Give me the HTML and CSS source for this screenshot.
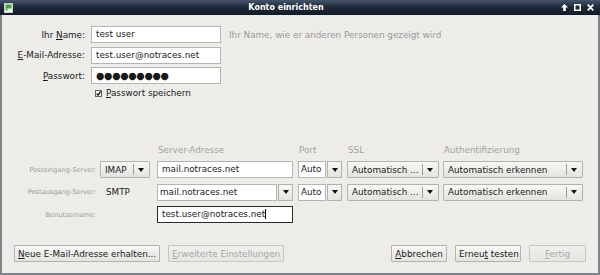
FILE: index.html
```html
<!DOCTYPE html>
<html lang="de">
<head>
    <meta charset="UTF-8">
    <title>Konto einrichten</title>
    <link rel="stylesheet" href="styles.css">
</head>
<body>
<div class="window">
    <div class="titlebar">
        <svg class="app-icon" width="9" height="10" viewBox="0 0 9 10">
            <rect x="0.5" y="0.5" width="8" height="9" fill="#f4f4f0" stroke="#c9cfc4"/>
            <rect x="1.5" y="1.5" width="6" height="4" fill="#3fa83a"/>
            <rect x="1.5" y="5.5" width="2" height="2" fill="#3fa83a"/>
        </svg>
        <span class="title">Konto einrichten</span>
        <div class="title-buttons">
            <svg width="7" height="7" viewBox="0 0 7 7"><path d="M3.5 0 L7 3.5 H4.8 V7 H2.2 V3.5 H0 Z" fill="#fff"/></svg>
            <svg width="7" height="7" viewBox="0 0 7 7"><rect x="0.75" y="0.75" width="5.5" height="5.5" fill="none" stroke="#fff" stroke-width="1.5"/></svg>
            <svg width="7" height="7" viewBox="0 0 7 7"><path d="M0.7 0.7 L6.3 6.3 M6.3 0.7 L0.7 6.3" stroke="#fff" stroke-width="1.7"/></svg>
        </div>
    </div>

    <div class="content">
        <div class="identity">
            <div class="field-row">
                <label class="field-label">Ihr <u>N</u>ame:</label>
                <div class="entry">test user</div>
                <span class="hint">Ihr Name, wie er anderen Personen gezeigt wird</span>
            </div>
            <div class="field-row">
                <label class="field-label"><u>E</u>-Mail-Adresse:</label>
                <div class="entry">test.user@notraces.net</div>
            </div>
            <div class="field-row">
                <label class="field-label"><u>P</u>asswort:</label>
                <div class="entry password">●●●●●●●●●</div>
            </div>
            <div class="check-row">
                <svg class="checkbox" width="7" height="7" viewBox="0 0 7 7">
                    <rect x="0.5" y="0.5" width="6" height="6" fill="#fff" stroke="#666"/>
                    <path d="M1.6 3.6 L3 5.2 L5.6 1.4" fill="none" stroke="#111" stroke-width="1.3"/>
                </svg>
                <span><u>P</u>asswort speichern</span>
            </div>
        </div>

        <div class="servers">
            <span></span><span></span>
            <span class="col-head">Server-Adresse</span>
            <span class="col-head">Port</span>
            <span class="col-head">SSL</span>
            <span class="col-head">Authentifizierung</span>

            <span class="row-label">Posteingang-Server:</span>
            <div class="combo w-imap"><span class="combo-text">IMAP</span><span class="sep"></span><span class="arrow"></span></div>
            <div class="entry w-server">mail.notraces.net</div>
            <div class="combo-entry w-port"><div class="entry">Auto</div><div class="drop"><span class="arrow"></span></div></div>
            <div class="combo w-ssl"><span class="combo-text">Automatisch ...</span><span class="sep"></span><span class="arrow"></span></div>
            <div class="combo w-auth"><span class="combo-text">Automatisch erkennen</span><span class="sep"></span><span class="arrow"></span></div>

            <span class="row-label">Postausgang-Server:</span>
            <span class="plain">SMTP</span>
            <div class="combo-entry w-server"><div class="entry">mail.notraces.net</div><div class="drop"><span class="arrow"></span></div></div>
            <div class="combo-entry w-port"><div class="entry">Auto</div><div class="drop"><span class="arrow"></span></div></div>
            <div class="combo w-ssl"><span class="combo-text">Automatisch ...</span><span class="sep"></span><span class="arrow"></span></div>
            <div class="combo w-auth"><span class="combo-text">Automatisch erkennen</span><span class="sep"></span><span class="arrow"></span></div>

            <span class="row-label">Benutzername:</span>
            <span></span>
            <div class="entry focused w-server">test.user@notraces.net<span class="caret"></span></div>
        </div>

        <div class="actions">
            <div class="action-group">
                <button class="btn"><u>N</u>eue E-Mail-Adresse erhalten...</button>
                <button class="btn disabled"><u>E</u>rweiterte Einstellungen</button>
            </div>
            <div class="action-group">
                <button class="btn w-cancel"><u>A</u>bbrechen</button>
                <button class="btn w-retest">Erneu<u>t</u> testen</button>
                <button class="btn disabled w-done"><u>F</u>ertig</button>
            </div>
        </div>
    </div>
</div>
</body>
</html>
```

FILE: styles.css
```css
* {
    box-sizing: border-box;
}

body {
    margin: 0;
    font-family: "DejaVu Sans", sans-serif;
    font-size: 8.8px;
    color: #1a1a1a;
}

.window {
    width: 600px;
    height: 275px;
    display: flex;
    flex-direction: column;
    background: #edece9;
    border: 2px solid #80858c;
    border-top: 0;
}

.titlebar {
    height: 15px;
    margin: 0 -2px;
    padding: 0 6px 0 4px;
    display: flex;
    align-items: center;
    position: relative;
    background: linear-gradient(#46556b, #1f2a3a 45%, #121a26);
}
.titlebar .title {
    position: absolute;
    left: 0;
    right: 28px;
    text-align: center;
    color: #fff;
    font-weight: bold;
    font-size: 8px;
}
.titlebar .title-buttons {
    margin-left: auto;
    display: flex;
    gap: 6px;
    position: relative;
}

.content {
    flex: 1;
    display: flex;
    flex-direction: column;
    padding: 11px 12px 0 12px;
}

.identity {
    display: flex;
    flex-direction: column;
    gap: 3.5px;
}
.field-row {
    display: flex;
    align-items: center;
    height: 17px;
}
.field-label {
    width: 71px;
    text-align: right;
    margin-right: 6px;
}
.field-row .entry {
    width: 130px;
}
.hint {
    margin-left: 8px;
    color: #9a9a98;
}

.entry {
    height: 17px;
    line-height: 15px;
    padding: 0 4px;
    background: #fff;
    border: 1px solid #b4b4b1;
    white-space: nowrap;
    overflow: hidden;
}
.entry.password {
    font-size: 9.6px;
    letter-spacing: -0.3px;
}
.entry.focused {
    border-color: #2b2b2b;
}
.caret {
    display: inline-block;
    width: 1px;
    height: 10px;
    vertical-align: -2px;
    background: #000;
}

.check-row {
    display: flex;
    align-items: center;
    height: 11px;
    margin-left: 81px;
    gap: 4px;
}

.servers {
    margin-top: 46px;
    display: grid;
    grid-template-columns: 86px 57px 141px 49px 96px 140px;
    grid-template-rows: 11px 17px 17px 17px;
    row-gap: 5.5px;
    align-items: center;
}
.col-head {
    color: #a3a3a0;
    padding-left: 1px;
    align-self: start;
    line-height: 11px;
}
.row-label {
    font-size: 6.6px;
    color: #9a9a98;
    text-align: right;
    padding-right: 4px;
    white-space: nowrap;
}
.plain {
    padding-left: 6px;
}

.w-imap { width: 50px; }
.w-server { width: 136px; }
.w-port { width: 44px; }
.w-ssl { width: 92px; }
.w-auth { width: 140px; }

.combo {
    height: 17px;
    display: flex;
    align-items: center;
    border: 1px solid #b2b2ae;
    border-radius: 1px;
    background: linear-gradient(#f7f7f5, #e4e3df);
}
.combo-text {
    flex: 1;
    padding-left: 4px;
    white-space: nowrap;
}
.combo .sep {
    width: 1px;
    height: 11px;
    background: #9d9d99;
    margin-right: 4px;
}
.combo .arrow {
    margin-right: 5px;
}

.arrow {
    width: 0;
    height: 0;
    border-left: 3px solid transparent;
    border-right: 3px solid transparent;
    border-top: 4px solid #111;
}

.combo-entry {
    height: 17px;
    display: flex;
}
.combo-entry .entry {
    flex: 1;
    padding: 0 2px;
}
.combo-entry .drop {
    width: 15px;
    margin-left: 1px;
    display: flex;
    align-items: center;
    justify-content: center;
    border: 1px solid #b2b2ae;
    background: linear-gradient(#f7f7f5, #e4e3df);
}

.actions {
    margin-top: 22px;
    display: flex;
    justify-content: space-between;
}
.action-group {
    display: flex;
    gap: 8px;
}
.btn {
    height: 17px;
    padding: 0 3px;
    font-family: inherit;
    font-size: 8.8px;
    color: #1a1a1a;
    white-space: nowrap;
    border: 1px solid #b2b2ae;
    border-radius: 1px;
    background: linear-gradient(#f7f7f5, #e4e3df);
}
.btn.disabled {
    color: #a8a8a5;
    background: linear-gradient(#f1f0ee, #e6e5e2);
    border-color: #c6c6c2;
}
.w-cancel { width: 56px; }
.w-retest { width: 66px; }
.w-done { width: 57px; }
```
